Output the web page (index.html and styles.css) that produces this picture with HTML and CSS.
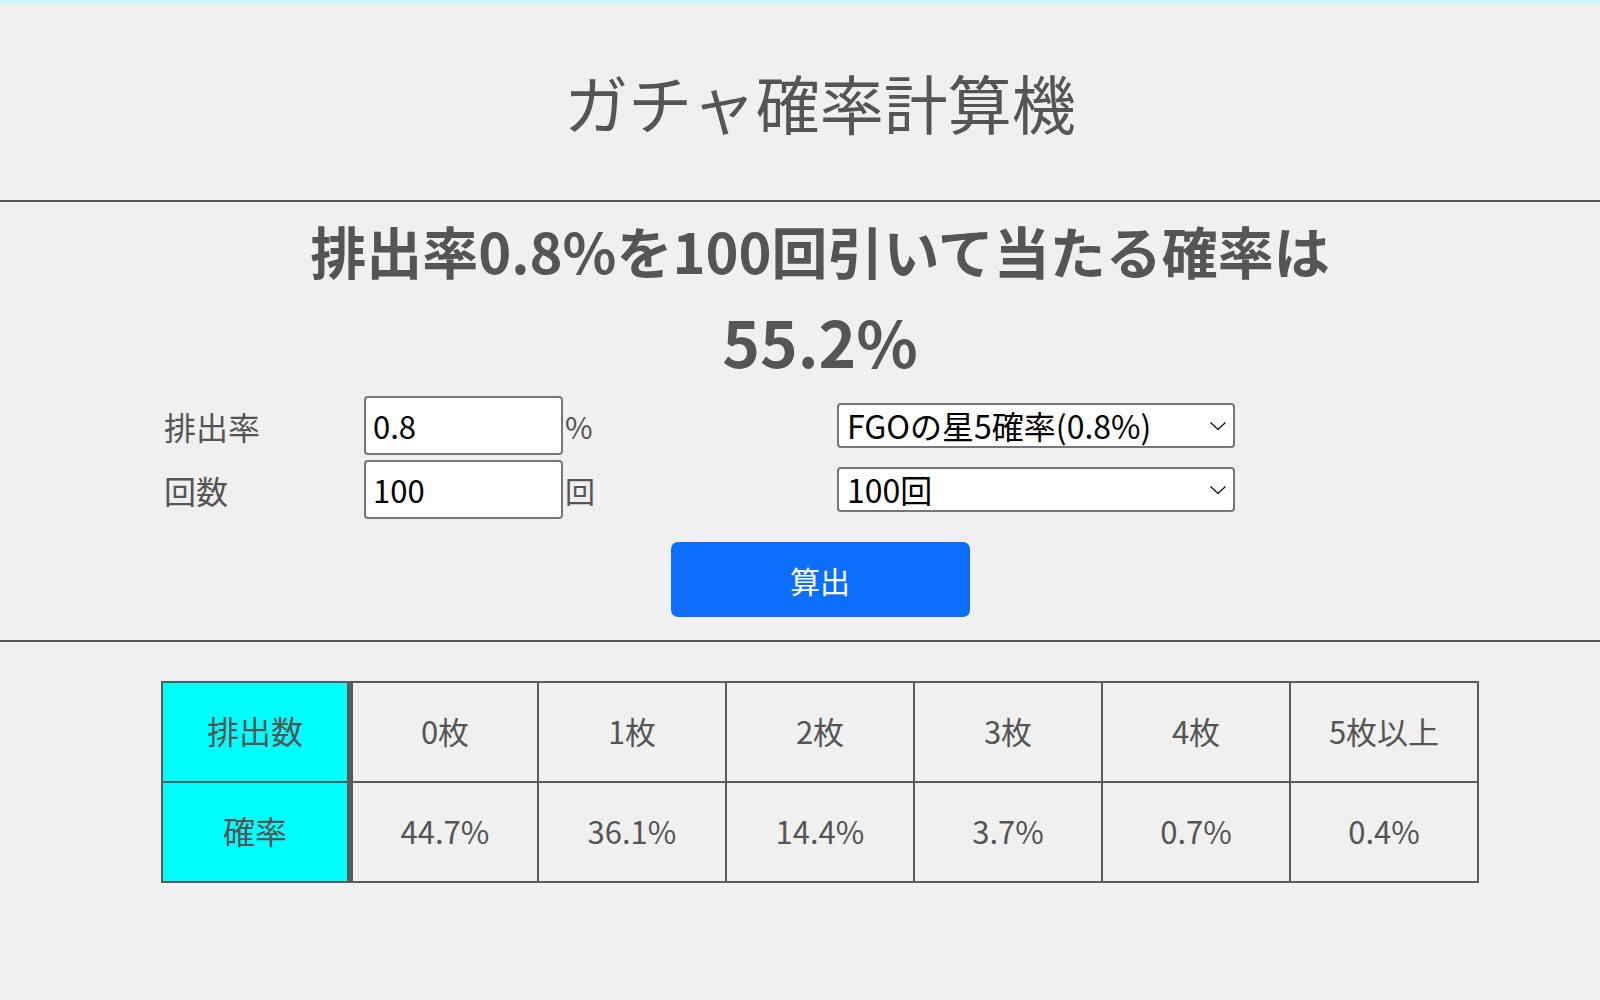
FILE: index.html
```html
<!DOCTYPE html>
<html lang="ja">
<head>
<meta charset="utf-8">
<title>ガチャ確率計算機</title>
<link rel="stylesheet" href="styles.css">
</head>
<body>
<header class="site-header">
  <h1 class="title">ガチャ確率計算機</h1>
</header>
<main>
  <section class="calc">
    <h2 class="question">排出率0.8%を100回引いて当たる確率は</h2>
    <p class="answer">55.2%</p>
    <div class="form">
      <div class="form-row">
        <label class="label" for="rate">排出率</label>
        <input class="num-input" id="rate" type="text" value="0.8">
        <span class="unit">%</span>
        <div class="select-wrap">
          <select class="preset">
            <option>FGOの星5確率(0.8%)</option>
          </select>
          <svg class="chev" width="18" height="10" viewBox="0 0 18 10"><path d="M1.5 1.5 L9 8.5 L16.5 1.5" fill="none" stroke="#222" stroke-width="1.6"/></svg>
        </div>
      </div>
      <div class="form-row">
        <label class="label" for="count">回数</label>
        <input class="num-input" id="count" type="text" value="100">
        <span class="unit">回</span>
        <div class="select-wrap">
          <select class="preset">
            <option>100回</option>
          </select>
          <svg class="chev" width="18" height="10" viewBox="0 0 18 10"><path d="M1.5 1.5 L9 8.5 L16.5 1.5" fill="none" stroke="#222" stroke-width="1.6"/></svg>
        </div>
      </div>
      <div class="btn-row">
        <button class="calc-btn" type="button">算出</button>
      </div>
    </div>
  </section>
  <section class="result">
    <table class="dist">
      <tr>
        <th class="head">排出数</th>
        <td>0枚</td><td>1枚</td><td>2枚</td><td>3枚</td><td>4枚</td><td>5枚以上</td>
      </tr>
      <tr>
        <th class="head">確率</th>
        <td>44.7%</td><td>36.1%</td><td>14.4%</td><td>3.7%</td><td>0.7%</td><td>0.4%</td>
      </tr>
    </table>
  </section>
</main>
</body>
</html>
```

FILE: styles.css
```css
html, body {
  margin: 0;
  padding: 0;
}
body {
  background: #f0f0f0;
  border-top: 3px solid #c4ffff;
  color: #555;
  font-family: "Noto Sans CJK JP", "Noto Sans", sans-serif;
  min-height: 997px;
}
.site-header {
  padding-left: 40px;
  border-bottom: 2px solid #555;
}
.title {
  margin: 0;
  height: 197px;
  line-height: 197px;
  font-size: 64px;
  font-weight: 400;
  text-align: center;
  color: #555;
}
.calc {
  border-bottom: 2px solid #555;
  padding-bottom: 23px;
}
.question {
  margin: 0;
  padding-top: 6px;
  padding-left: 40px;
  font-size: 56px;
  line-height: 84px;
  font-weight: 700;
  text-align: center;
}
.answer {
  margin: 0;
  padding-left: 40px;
  font-size: 64px;
  line-height: 96px;
  font-weight: 700;
  text-align: center;
}
.form {
  margin-top: 8px;
}
.form-row {
  display: grid;
  grid-template-columns: 200px 199px 274px 398px;
  align-items: center;
  padding-left: 164px;
  margin-bottom: 5px;
}
.label {
  font-size: 32px;
  line-height: 58px;
}
.num-input {
  box-sizing: border-box;
  width: 199px;
  height: 59px;
  margin: 0;
  border: 2px solid #777;
  border-radius: 4px;
  background: #fff;
  padding: 0 0 0 7px;
  font-family: "Noto Sans CJK JP", "Noto Sans", sans-serif;
  font-size: 31px;
  color: #000;
  outline: none;
}
.unit {
  font-size: 30px;
  padding-left: 2px;
}
.select-wrap {
  position: relative;
  width: 398px;
  height: 45px;
}
.preset {
  appearance: none;
  -webkit-appearance: none;
  box-sizing: border-box;
  width: 398px;
  height: 45px;
  margin: 0;
  border: 2px solid #777;
  border-radius: 4px;
  background: #fff;
  padding: 0 0 0 8px;
  font-family: "Noto Sans CJK JP", "Noto Sans", sans-serif;
  font-size: 32px;
  line-height: 41px;
  color: #000;
}
.chev {
  position: absolute;
  right: 8px;
  top: 18px;
  pointer-events: none;
}
.btn-row {
  display: flex;
  justify-content: center;
  padding-left: 40px;
  margin-top: 23px;
}
.calc-btn {
  width: 299px;
  height: 75px;
  border: none;
  border-radius: 7px;
  background: #0d6efd;
  color: #fff;
  font-family: "Noto Sans CJK JP", "Noto Sans", sans-serif;
  font-size: 30px;
}
.result {
  padding-left: 40px;
  padding-top: 39px;
}
.dist {
  margin: 0 auto;
  border-collapse: collapse;
}
.dist th, .dist td {
  box-sizing: border-box;
  width: 188px;
  height: 100px;
  border: 2px solid #5a5a5a;
  text-align: center;
  font-size: 31px;
  font-weight: 400;
  color: #555;
  padding: 0 0 4px 0;
}
.dist .head {
  background: #00ffff;
  font-size: 32px;
  border-right: 6px solid #5a5a5a;
}
```
